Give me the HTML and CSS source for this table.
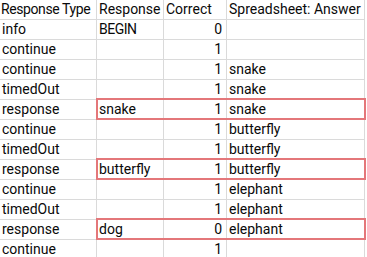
FILE: index.html
```html
<!DOCTYPE html>
<html>
<head>
<meta charset="utf-8">
<link rel="stylesheet" href="styles.css">
</head>
<body>
<div class="sheet">
  <div class="row"><div class="c a tight">Response Type</div><div class="c b">Response</div><div class="c n hd">Correct</div><div class="c d">Spreadsheet: Answer</div></div>
  <div class="row"><div class="c a">info</div><div class="c b caps">BEGIN</div><div class="c n">0</div><div class="c d"></div></div>
  <div class="row"><div class="c a">continue</div><div class="c b"></div><div class="c n">1</div><div class="c d"></div></div>
  <div class="row"><div class="c a">continue</div><div class="c b"></div><div class="c n">1</div><div class="c d">snake</div></div>
  <div class="row"><div class="c a">timedOut</div><div class="c b"></div><div class="c n">1</div><div class="c d">snake</div></div>
  <div class="row"><div class="c a">response</div><div class="c b">snake</div><div class="c n">1</div><div class="c d">snake</div><span class="mark"></span></div>
  <div class="row"><div class="c a">continue</div><div class="c b"></div><div class="c n">1</div><div class="c d">butterfly</div></div>
  <div class="row"><div class="c a">timedOut</div><div class="c b"></div><div class="c n">1</div><div class="c d">butterfly</div></div>
  <div class="row"><div class="c a">response</div><div class="c b">butterfly</div><div class="c n">1</div><div class="c d">butterfly</div><span class="mark"></span></div>
  <div class="row"><div class="c a">continue</div><div class="c b"></div><div class="c n">1</div><div class="c d">elephant</div></div>
  <div class="row"><div class="c a">timedOut</div><div class="c b"></div><div class="c n">1</div><div class="c d">elephant</div></div>
  <div class="row"><div class="c a">response</div><div class="c b">dog</div><div class="c n">0</div><div class="c d">elephant</div><span class="mark"></span></div>
  <div class="row"><div class="c a">continue</div><div class="c b"></div><div class="c n">1</div><div class="c d"></div></div>
</div>
</body>
</html>
```
FILE: styles.css
```css
html, body {
  margin: 0;
  padding: 0;
  background: #ffffff;
}
body {
  width: 367px;
  height: 257px;
  overflow: hidden;
  font-family: Roboto, "Liberation Sans", sans-serif;
  font-size: 14px;
  color: #0a0a0a;
}
.sheet {
  display: flex;
  flex-direction: column;
}
.row {
  position: relative;
  display: flex;
  height: 20px;
}
.c {
  box-sizing: border-box;
  height: 20px;
  border-right: 1px solid #dadada;
  border-bottom: 1px solid #dadada;
  padding: 0 2px;
  line-height: 19px;
  white-space: nowrap;
  overflow: hidden;
}
.tight { letter-spacing: -0.4px; padding-left: 1px; }
.caps { letter-spacing: -0.5px; }
.a { width: 97px; }
.b { width: 67px; }
.n { width: 63px; text-align: right; padding-right: 4px; }
.n.hd { text-align: left; padding-left: 2px; }
.d { width: 138px; }
.mark {
  position: absolute;
  left: 96px;
  top: -2px;
  width: 270px;
  height: 22px;
  box-sizing: border-box;
  border: 2px solid #e4777a;
}
```
